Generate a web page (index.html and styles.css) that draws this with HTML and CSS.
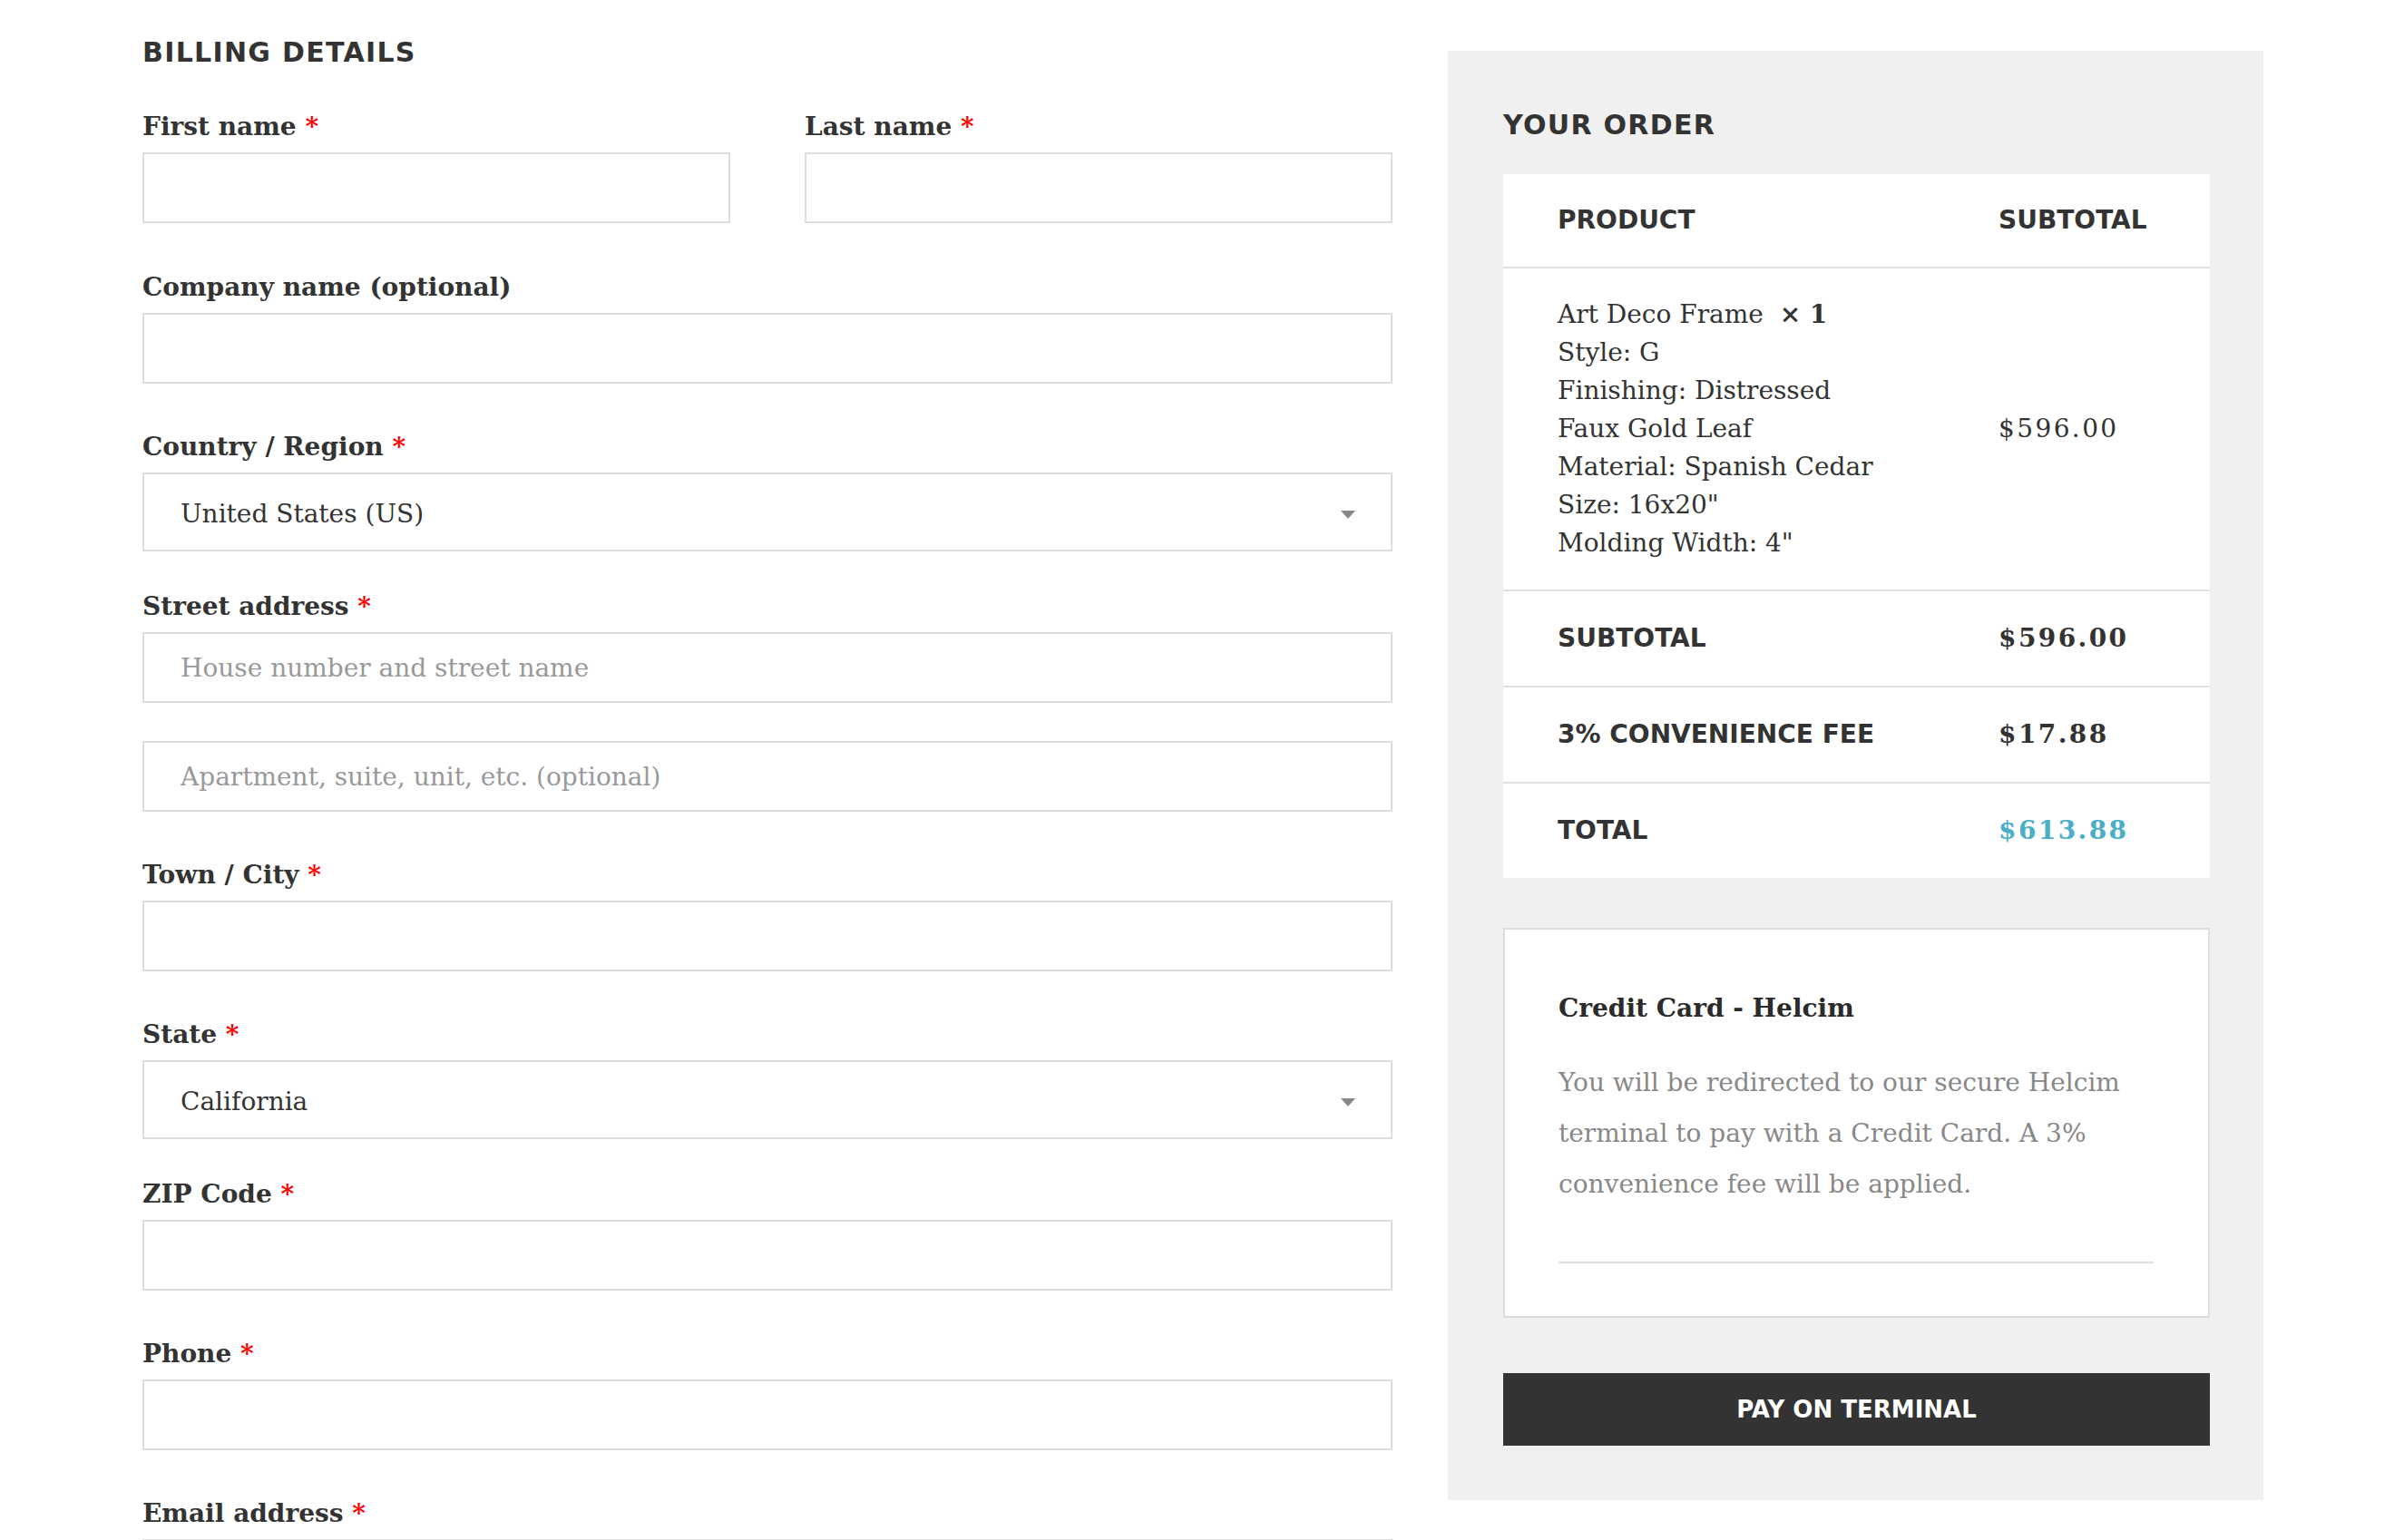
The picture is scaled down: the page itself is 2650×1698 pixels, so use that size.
FILE: index.html
```html
<!DOCTYPE html>
<html lang="en">
<head>
<meta charset="utf-8">
<title>Checkout</title>
<link rel="stylesheet" href="styles.css">
</head>
<body>
<form class="checkout">
  <div class="billing">
    <h3 class="section-title">Billing details</h3>

    <div class="row-2">
      <div class="field">
        <label>First name&nbsp;<abbr class="required" title="required">*</abbr></label>
        <input class="input" type="text">
      </div>
      <div class="field">
        <label>Last name&nbsp;<abbr class="required" title="required">*</abbr></label>
        <input class="input" type="text">
      </div>
    </div>

    <div class="field">
      <label>Company name&nbsp;<span class="optional">(optional)</span></label>
      <input class="input" type="text">
    </div>

    <div class="field field-select">
      <label>Country / Region&nbsp;<abbr class="required" title="required">*</abbr></label>
      <span class="select">
        <span class="select-rendered">United States (US)</span>
        <span class="select-arrow"></span>
      </span>
    </div>

    <div class="field">
      <label>Street address&nbsp;<abbr class="required" title="required">*</abbr></label>
      <input class="input" type="text" placeholder="House number and street name">
      <input class="input" type="text" placeholder="Apartment, suite, unit, etc. (optional)">
    </div>

    <div class="field">
      <label>Town / City&nbsp;<abbr class="required" title="required">*</abbr></label>
      <input class="input" type="text">
    </div>

    <div class="field field-select">
      <label>State&nbsp;<abbr class="required" title="required">*</abbr></label>
      <span class="select">
        <span class="select-rendered">California</span>
        <span class="select-arrow"></span>
      </span>
    </div>

    <div class="field">
      <label>ZIP Code&nbsp;<abbr class="required" title="required">*</abbr></label>
      <input class="input" type="text">
    </div>

    <div class="field">
      <label>Phone&nbsp;<abbr class="required" title="required">*</abbr></label>
      <input class="input" type="tel">
    </div>

    <div class="field">
      <label>Email address&nbsp;<abbr class="required" title="required">*</abbr></label>
      <input class="input" type="email">
    </div>
  </div>

  <div class="order">
    <h3 class="section-title">Your order</h3>

    <table class="order-table">
      <colgroup><col class="col-product"><col class="col-total"></colgroup>
      <thead>
        <tr><th>Product</th><th>Subtotal</th></tr>
      </thead>
      <tbody>
        <tr>
          <td class="product-name">
            <div>Art Deco Frame&nbsp; <strong>×&nbsp;1</strong></div>
            <div>Style: G</div>
            <div>Finishing: Distressed</div>
            <div>Faux Gold Leaf</div>
            <div>Material: Spanish Cedar</div>
            <div>Size: 16x20"</div>
            <div>Molding Width: 4"</div>
          </td>
          <td><span class="amount">$596.00</span></td>
        </tr>
      </tbody>
      <tfoot>
        <tr><th>Subtotal</th><td><span class="amount">$596.00</span></td></tr>
        <tr><th>3% Convenience Fee</th><td><span class="amount">$17.88</span></td></tr>
        <tr class="order-total"><th>Total</th><td><span class="amount">$613.88</span></td></tr>
      </tfoot>
    </table>

    <div class="payment">
      <p class="pay-title">Credit Card - Helcim</p>
      <p class="pay-desc">You will be redirected to our secure Helcim terminal to pay with a Credit Card. A 3% convenience fee will be applied.</p>
      <div class="pay-divider"></div>
    </div>

    <button type="button" class="place-order">Pay on terminal</button>
  </div>
</form>
</body>
</html>
```

FILE: styles.css
```css
html, body {
  margin: 0;
  padding: 0;
  background: #fff;
}

body {
  color: #333;
  font-family: "DejaVu Serif", serif;
  font-size: 28px;
  line-height: 42px;
}

.checkout {
  display: flex;
  align-items: flex-start;
  padding: 40px 0 0 157px;
}

.billing {
  flex: none;
  width: 1378px;
}

.section-title {
  margin: 0;
  font-family: "DejaVu Sans", sans-serif;
  font-weight: bold;
  font-size: 30px;
  line-height: 36px;
  letter-spacing: 1.3px;
  text-transform: uppercase;
  color: #333;
}

.billing .section-title {
  margin-bottom: 43px;
}

.row-2 {
  display: flex;
  gap: 82px;
  margin-bottom: 1px;
}

.row-2 .field {
  flex: 1 1 0;
}

.field {
  margin-bottom: 49px;
}

.field label {
  display: block;
  font-weight: bold;
  line-height: 42px;
  margin-bottom: 7px;
}

.required {
  color: #ff0000;
  text-decoration: none;
  border: none;
  font-weight: bold;
}

.input {
  display: block;
  width: 100%;
  height: 78px;
  box-sizing: border-box;
  margin: 0;
  padding: 0 40px;
  border: 2px solid #ddd;
  border-radius: 0;
  background: #fff;
  color: #333;
  font-family: "DejaVu Serif", serif;
  font-size: 28px;
  outline: none;
}

.input::placeholder {
  color: #999;
  opacity: 1;
}

.input + .input {
  margin-top: 42px;
}

.field-select {
  margin-bottom: 40px;
}

.select {
  position: relative;
  display: flex;
  align-items: center;
  height: 87px;
  box-sizing: border-box;
  padding: 4px 40px 0;
  border: 2px solid #ddd;
  background: #fff;
}

.select-rendered {
  color: #333;
  line-height: 42px;
}

.select-arrow {
  position: absolute;
  right: 39px;
  top: 40px;
  width: 0;
  height: 0;
  border-left: 8px solid transparent;
  border-right: 8px solid transparent;
  border-top: 9px solid #888;
}

/* Order review */
.order {
  flex: none;
  width: 899px;
  box-sizing: border-box;
  margin-left: 61px;
  margin-top: 16px;
  padding: 64px 59px 60px 61px;
  background: #f0f0f0;
}

.order .section-title {
  margin-bottom: 36px;
}

.order-table {
  width: 100%;
  border-collapse: collapse;
  table-layout: fixed;
  background: #fff;
}

.col-product {
  width: 486px;
}

.order-table th,
.order-table td {
  padding: 30px 0 30px 60px;
  text-align: left;
  vertical-align: middle;
  line-height: 42px;
  font-size: 28px;
}

.order-table th {
  font-family: "DejaVu Sans", sans-serif;
  font-weight: bold;
  text-transform: uppercase;
}

.order-table tbody tr td,
.order-table tfoot tr th,
.order-table tfoot tr td {
  border-top: 2px solid #e0e0e0;
}

.order-table tfoot th,
.order-table tfoot td {
  padding-top: 31px;
  padding-bottom: 31px;
}

.order-table tfoot td {
  font-weight: bold;
}

.amount {
  letter-spacing: 2.4px;
}

.order-total td {
  color: #4aaec8;
}

.payment {
  margin-top: 55px;
  padding: 66px 60px 58px 59px;
  border: 2px solid #ddd;
  background: #fff;
}

.pay-title {
  margin: 0;
  font-weight: bold;
  line-height: 42px;
  color: #2b2b2b;
}

.pay-desc {
  margin: 33px 0 0;
  color: #888;
  line-height: 56px;
}

.pay-divider {
  margin-top: 57px;
  border-top: 2px solid #ddd;
}

.place-order {
  display: block;
  width: 100%;
  height: 80px;
  margin-top: 61px;
  padding: 0;
  border: none;
  border-radius: 0;
  background: #333;
  color: #fff;
  font-family: "DejaVu Sans", sans-serif;
  font-weight: bold;
  font-size: 26px;
  text-transform: uppercase;
  cursor: pointer;
}
```
